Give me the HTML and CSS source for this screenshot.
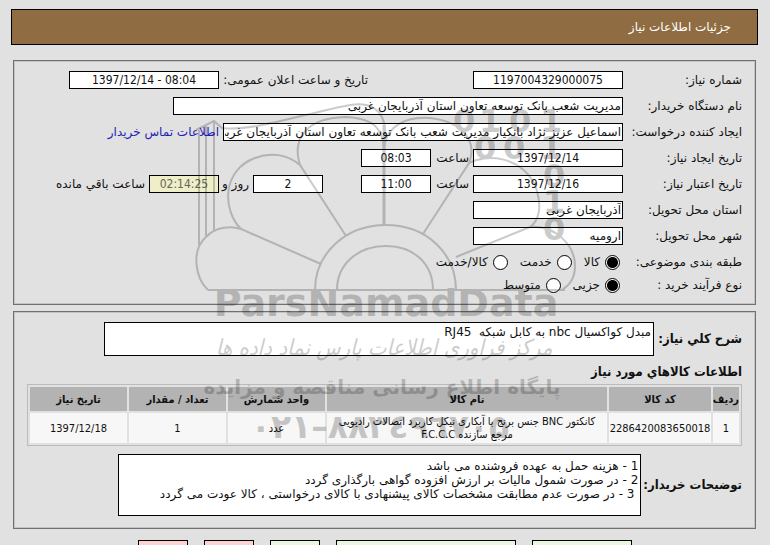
FILE: index.html
```html
<!DOCTYPE html>
<html lang="fa" dir="rtl">
<head>
<meta charset="utf-8">
<meta name="viewport" content="width=device-width, initial-scale=1">
<title>جزئیات اطلاعات نیاز</title>
<link rel="stylesheet" href="styles.css">
</head>
<body>
<header class="banner"><h1>جزئیات اطلاعات نیاز</h1></header>
<main>
<section class="panel details">
  <div class="row">
    <label class="name" for="num">شماره نیاز:</label>
    <input class="mid" id="num" value="1197004329000075" readonly>
    <div class="pair">
      <label for="pub">تاریخ و ساعت اعلان عمومی:</label>
      <input class="mid" id="pub" dir="ltr" value="1397/12/14 - 08:04" readonly>
    </div>
  </div>
  <div class="row">
    <label class="name" for="org">نام دستگاه خریدار:</label>
    <input class="full" id="org" value="مدیریت شعب بانک توسعه تعاون استان آذربایجان غربی" readonly>
  </div>
  <div class="row">
    <label class="name" for="req">ایجاد کننده درخواست:</label>
    <input class="wide" id="req" value="اسماعیل عزیز نژاد بانکیار مدیریت شعب بانک توسعه تعاون استان آذربایجان غربی" readonly>
    <a href="#contact">اطلاعات تماس خریدار</a>
  </div>
  <div class="row">
    <label class="name" for="cdate">تاریخ ایجاد نیاز:</label>
    <input class="mid" id="cdate" value="1397/12/14" readonly>
    <label class="hour" for="ctime">ساعت</label>
    <input class="short" id="ctime" value="08:03" readonly>
  </div>
  <div class="row">
    <label class="name" for="edate">تاریخ اعتبار نیاز:</label>
    <input class="mid" id="edate" value="1397/12/16" readonly>
    <label class="hour" for="etime">ساعت</label>
    <input class="short" id="etime" value="11:00" readonly>
    <div class="remain">
      <input class="short" id="days" value="2" readonly>
      <label class="days" for="days">روز و</label>
      <input class="short timer" id="left" value="02:14:25" readonly>
      <label for="left">ساعت باقي مانده</label>
    </div>
  </div>
  <div class="row">
    <label class="name" for="prov">استان محل تحویل:</label>
    <input class="mid start" id="prov" value="آذربایجان غربی" readonly>
  </div>
  <div class="row">
    <label class="name" for="city">شهر محل تحویل:</label>
    <input class="mid start" id="city" value="ارومیه" readonly>
  </div>
  <div class="row" role="radiogroup" aria-labelledby="kind">
    <span class="name" id="kind">طبقه بندی موضوعی:</span>
    <div class="choices">
      <label><input type="radio" name="kind" checked>کالا</label>
      <label><input type="radio" name="kind">خدمت</label>
      <label><input type="radio" name="kind">کالا/خدمت</label>
    </div>
  </div>
  <div class="row last" role="radiogroup" aria-labelledby="process">
    <span class="name" id="process">نوع فرآیند خرید :</span>
    <div class="choices">
      <label><input type="radio" name="process" checked>جزیی</label>
      <label><input type="radio" name="process">متوسط</label>
    </div>
  </div>
</section>

<section class="panel goods">
  <div class="note">
    <label for="desc">شرح کلي نیاز:</label>
    <textarea id="desc" class="summary" readonly>مبدل کواکسیال nbc به کابل شبکه  RJ45</textarea>
  </div>
  <h2>اطلاعات کالاهاي مورد نیاز</h2>
  <table>
    <colgroup><col class="c1"><col class="c2"><col class="c3"><col class="c4"><col class="c4"><col class="c4"></colgroup>
    <thead><tr><th>ردیف</th><th>کد کالا</th><th>نام کالا</th><th>واحد شمارش</th><th>تعداد / مقدار</th><th>تاریخ نیاز</th></tr></thead>
    <tbody><tr><td>1</td><td class="code">2286420083650018</td><td class="item">کانکتور BNC جنس برنج با آبکاری نیکل کاربرد اتصالات رادیویی<br>مرجع سازنده F.C.C.C</td><td>عدد</td><td>1</td><td>1397/12/18</td></tr></tbody>
  </table>
  <div class="note">
    <label for="remarks">توضیحات خریدار:</label>
    <textarea id="remarks" class="remarks" readonly>1 - هزینه حمل به عهده فروشنده می باشد
2 - در صورت شمول مالیات بر ارزش افزوده گواهی بارگذاری گردد
 3 - در صورت عدم مطابقت مشخصات کالای پیشنهادی با کالای درخواستی ، کالا عودت می گردد</textarea>
  </div>
</section>
</main>

<footer class="actions">
  <button class="w3 ok" aria-label="تایید"></button>
  <button class="w2 ok" aria-label="مشاهده اسناد"></button>
  <button class="w1 ok" aria-label="چاپ"></button>
  <button class="w1 no" aria-label="بازگشت"></button>
  <button class="w1 no" aria-label="خروج"></button>
</footer>

<svg class="watermark" viewBox="190 90 400 360" direction="rtl" aria-hidden="true">
  <g class="lines">
    <path d="M208 290H565M315 290C315 254 345 225 386 225S456 254 456 290M337 290C337 264 358 246 386 246S433 264 433 290"/>
    <path d="M321 264L241 229C222 210 222 170 255 158C270 152 287 154 300 165L346 236"/>
    <path d="M208 290C195 278 191 250 206 237C216 226 232 226 241 229"/>
    <path d="M300 165C292 140 305 118 345 117C375 118 384 130 384 152M384 152C384 127 405 116 430 118C465 122 477 143 469 163L423 234"/>
    <path d="M469 163C485 154 520 155 535 185C544 210 537 222 530 227L456 257"/>
    <path d="M530 227C555 225 575 245 575 266C575 280 568 286 562 290"/>
    <path d="M199 245V130M206 236V124M214 230V121M196 130L214 121L222 128C250 132 300 115 345 106C370 100 385 110 385 132"/>
    <path class="stem" d="M384 225V125"/>
  </g>
  <g class="digits">
    <text x="453" y="132">0</text>
    <text x="479" y="132">1</text>
    <text x="509" y="132">0</text>
    <text x="540" y="132">1</text>
    <text x="474" y="159">0</text>
    <text x="503" y="159">0</text>
    <text x="540" y="159">1</text>
    <text x="543" y="187">0</text>
    <text x="543" y="213">1</text>
    <text x="543" y="240">0</text>
  </g>
  <text class="brand" x="386" y="316">ParsNamadData</text>
  <text class="script" x="384" y="355">مرکز فرآوری اطلاعات پارس نماد داده ها</text>
  <text class="portal" x="382" y="394">پایگاه اطلاع رسانی مناقصه و مزایده</text>
  <text class="phone" x="380" y="438">۰۲۱–۸۸۳٤۹٦۷۰۵</text>
</svg>
</body>
</html>
```
FILE: styles.css
```css
* { box-sizing: border-box; }
body {
  position: relative;
  margin: 0;
  height: 100vh;
  overflow: hidden;
  padding: 9px 12px 0 11px;
  background: #e1e1e1;
  color: #111;
  font: 12px/16px "DejaVu Sans", sans-serif;
}
input, textarea, button { font: inherit; color: inherit; }
.banner {
  height: 36px;
  padding: 0 26px;
  display: flex;
  align-items: center;
  background: #8f6c41;
  border: 1px solid #000;
  color: #fff;
}
h1 { margin: 0; font-size: 12px; font-weight: normal; }
main { display: grid; gap: 6px; margin: 15px 2px 0; }
.panel { border: 1px solid #707070; box-shadow: inset 0 0 0 1px #c4c4c4; }
.details { padding: 10px 13px 10px 0; }
.row { display: flex; align-items: center; gap: 4px; height: 18px; margin-bottom: 8px; }
.row.last { margin: -3px 0 0; }
.name { flex: none; width: 115px; white-space: nowrap; }
.row label { white-space: nowrap; }
.row > input, .pair input, .remain input {
  height: 18px;
  padding: 0 1px;
  border: 1px solid #000;
  background: #fff;
  text-align: center;
}
.row .mid, .row .short { font-family: "DejaVu Sans Condensed", sans-serif; }
.row .mid { width: 150px; }
.row .short { width: 70px; }
.row .full { width: 450px; text-align: start; }
.row .wide { width: 400px; text-align: start; }
.row .start { font-family: inherit; text-align: start; }
.row .timer { background: #eeeec8; color: #665; }
.hour { width: 34px; }
.pair, .remain { display: flex; align-items: center; gap: 4px; }
.pair { margin-inline-start: 101px; }
.pair label { width: 145px; }
.remain { margin-inline-start: 34px; }
.days { width: 26px; }
a { color: #2222b8; text-decoration: none; white-space: nowrap; }
.choices { display: flex; gap: 12px; padding-inline-start: 3px; }
.choices label { display: flex; align-items: center; gap: 5px; }
.choices input {
  appearance: none;
  width: 15px;
  height: 15px;
  margin: 0;
  border: 1px solid #000;
  border-radius: 50%;
  background: #fff;
}
.choices input:checked { background: radial-gradient(circle, #000 5px, #fff 6px); }
.goods { padding: 10px 13px 12px; }
.note { display: flex; align-items: center; gap: 4px; }
.note label, h2 { font: bold 13px/16px "DejaVu Sans Condensed", sans-serif; }
.note label { flex: none; min-width: 84px; white-space: nowrap; }
textarea {
  display: block;
  margin: 0;
  padding: 2px;
  border: 1px solid #000;
  background: #fff;
  resize: none;
  overflow: hidden;
  line-height: 14px;
}
.summary { width: 550px; height: 34px; }
.remarks { width: 523px; height: 62px; padding-top: 4px; }
.note:last-child { gap: 2px; }
h2 { margin: 8px 0 4px; }
table {
  width: 100%;
  margin-bottom: 8px;
  table-layout: fixed;
  border: 1px solid #bbb;
  border-spacing: 2px;
  font: 11px/13px "DejaVu Sans Condensed", sans-serif;
  text-align: center;
}
th { height: 24px; padding: 0; background: #b3b3b3; }
td { height: 30px; padding: 0; background: #f7f7f7; }
.code, .item { white-space: nowrap; }
.c1 { width: 26px; }
.c2 { width: 102px; }
.c4 { width: 97px; }
.actions { display: flex; gap: 16px; margin-top: 11px; padding-inline-start: 126px; }
.actions button { height: 24px; border: 1px solid #000; }
.w1 { width: 50px; }
.w2 { width: 180px; }
.w3 { width: 100px; }
.actions .ok { background: #e8f8e0; }
.actions .no { background: #ffd2d2; }
.watermark {
  position: absolute;
  left: 190px;
  top: 90px;
  width: 400px;
  height: 360px;
  opacity: .2;
  pointer-events: none;
  text-anchor: middle;
}
.lines { fill: none; stroke: #000; stroke-width: 2; }
.lines .stem { stroke-width: 3; }
.digits { font: bold 32px "DejaVu Sans", sans-serif; text-anchor: start; direction: ltr; }
.brand { font: bold 38px "DejaVu Sans", sans-serif; direction: ltr; }
.script { font: italic 22px "DejaVu Sans Condensed", sans-serif; }
.portal { font: bold 20px "DejaVu Sans", sans-serif; }
.phone { font: bold 33px "DejaVu Sans", sans-serif; direction: ltr; }
```
